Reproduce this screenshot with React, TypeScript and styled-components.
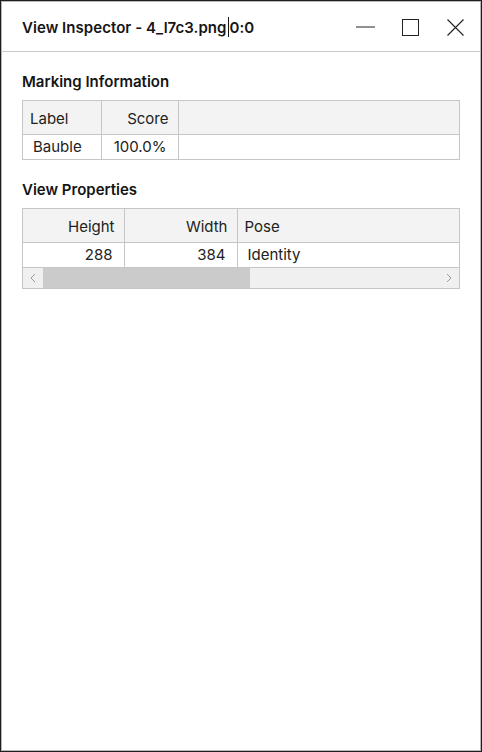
import React from 'react';
import styled, { createGlobalStyle } from 'styled-components';

const GlobalStyle = createGlobalStyle`
  html, body {
    margin: 0;
    padding: 0;
    background: #ffffff;
  }

  body {
    font-family: Inter, "Noto Sans", "Liberation Sans", sans-serif;
    color: #1c1c1c;
  }
`;

const Window = styled.div`
  box-sizing: border-box;
  width: 482px;
  height: 752px;
  border: 1px solid #1e1e1e;
  box-shadow: inset 0 0 0 1px #b8b8b8;
  background: #ffffff;
  display: flex;
  flex-direction: column;
`;

const TitleBar = styled.div`
  height: 50px;
  display: flex;
  align-items: center;
  padding: 0 0 0 21px;
  border-bottom: 1px solid #c9c9c9;
`;

const Title = styled.div`
  flex: 1;
  font-size: 15px;
  font-weight: 600;
  letter-spacing: 0.05px;
  color: #151515;
  margin-top: 2px;
`;

const Caret = styled.span`
  display: inline-block;
  width: 1px;
  height: 20px;
  background: #151515;
  vertical-align: -4px;
  margin: 0 1px;
`;

const Controls = styled.div`
  display: flex;
  align-items: center;
  margin-right: 3px;
`;

const ControlButton = styled.div`
  width: 45px;
  height: 50px;
  display: flex;
  align-items: center;
  justify-content: center;
  margin-top: 2px;
`;

const Content = styled.div`
  padding: 21px 21px 0 21px;
  display: flex;
  flex-direction: column;
`;

const SectionTitle = styled.div`
  font-size: 15px;
  font-weight: 600;
  color: #151515;
  line-height: 18px;
  margin-bottom: 9px;
`;

const Frame = styled.div<{ $gap?: number }>`
  border: 1px solid #c6c6c6;
  margin-bottom: ${(p) => p.$gap ?? 0}px;
`;

const Grid = styled.table`
  width: 100%;
  border-collapse: collapse;
  table-layout: fixed;
  font-size: 15px;
  color: #222222;
`;

const HeadCell = styled.th<{ $align?: string; $w?: number }>`
  height: 33px;
  padding: 0 9px 0 7px;
  background: #f3f3f3;
  font-weight: 400;
  text-align: ${(p) => p.$align ?? 'left'};
  width: ${(p) => (p.$w ? `${p.$w}px` : 'auto')};
  border-right: 1px solid #c6c6c6;
  border-bottom: 1px solid #c6c6c6;
  box-sizing: border-box;
  padding-top: 2px;

  &:last-child {
    border-right: none;
  }
`;

const Cell = styled.td<{ $align?: string }>`
  height: 25px;
  padding: 0 11px 0 10px;
  text-align: ${(p) => p.$align ?? 'left'};
  border-right: 1px solid #c6c6c6;
  box-sizing: border-box;
  white-space: nowrap;

  &:last-child {
    border-right: none;
  }
`;

const ScrollBar = styled.div`
  height: 20px;
  display: flex;
  background: #f0f0f0;
  border-top: 1px solid #c6c6c6;
`;

const ArrowBox = styled.div`
  width: 20px;
  display: flex;
  align-items: center;
  justify-content: center;
`;

const Track = styled.div`
  flex: 1;
  display: flex;
`;

const Thumb = styled.div`
  background: #cbcbcb;
  height: 100%;
`;

const Chevron: React.FC<{ dir: 'left' | 'right' }> = ({ dir }) => (
  <svg width="6" height="10" viewBox="0 0 6 10">
    <path
      d={dir === 'left' ? 'M5 1 L1 5 L5 9' : 'M1 1 L5 5 L1 9'}
      fill="none"
      stroke="#9a9a9a"
      strokeWidth="1"
    />
  </svg>
);

export default function App(): React.ReactElement {
  return (
    <>
      <GlobalStyle />
      <Window>
        <TitleBar>
          <Title>
            View Inspector - 4_l7c3.png<Caret />0:0
          </Title>
          <Controls>
            <ControlButton>
              <svg width="20" height="2" viewBox="0 0 20 2">
                <line x1="0" y1="1" x2="19" y2="1" stroke="#222" strokeWidth="1" />
              </svg>
            </ControlButton>
            <ControlButton>
              <svg width="17" height="17" viewBox="0 0 17 17">
                <rect x="0.5" y="0.5" width="16" height="16" fill="none" stroke="#222" strokeWidth="1" />
              </svg>
            </ControlButton>
            <ControlButton>
              <svg width="17" height="17" viewBox="0 0 17 17">
                <path d="M0.5 0.5 L16.5 16.5 M16.5 0.5 L0.5 16.5" stroke="#222" strokeWidth="1.1" />
              </svg>
            </ControlButton>
          </Controls>
        </TitleBar>

        <Content>
          <SectionTitle>Marking Information</SectionTitle>
          <Frame $gap={21}>
            <Grid>
              <thead>
                <tr>
                  <HeadCell $w={78}>Label</HeadCell>
                  <HeadCell $w={77} $align="right">Score</HeadCell>
                  <HeadCell />
                </tr>
              </thead>
              <tbody>
                <tr>
                  <Cell>Bauble</Cell>
                  <Cell $align="right">100.0%</Cell>
                  <Cell />
                </tr>
              </tbody>
            </Grid>
          </Frame>

          <SectionTitle>View Properties</SectionTitle>
          <Frame>
            <Grid>
              <thead>
                <tr>
                  <HeadCell $w={101} $align="right">Height</HeadCell>
                  <HeadCell $w={113} $align="right">Width</HeadCell>
                  <HeadCell>Pose</HeadCell>
                </tr>
              </thead>
              <tbody>
                <tr>
                  <Cell $align="right">288</Cell>
                  <Cell $align="right">384</Cell>
                  <Cell>Identity</Cell>
                </tr>
              </tbody>
            </Grid>
            <ScrollBar>
              <ArrowBox>
                <Chevron dir="left" />
              </ArrowBox>
              <Track>
                <Thumb style={{ width: 207 }} />
              </Track>
              <ArrowBox>
                <Chevron dir="right" />
              </ArrowBox>
            </ScrollBar>
          </Frame>
        </Content>
      </Window>
    </>
  );
}
